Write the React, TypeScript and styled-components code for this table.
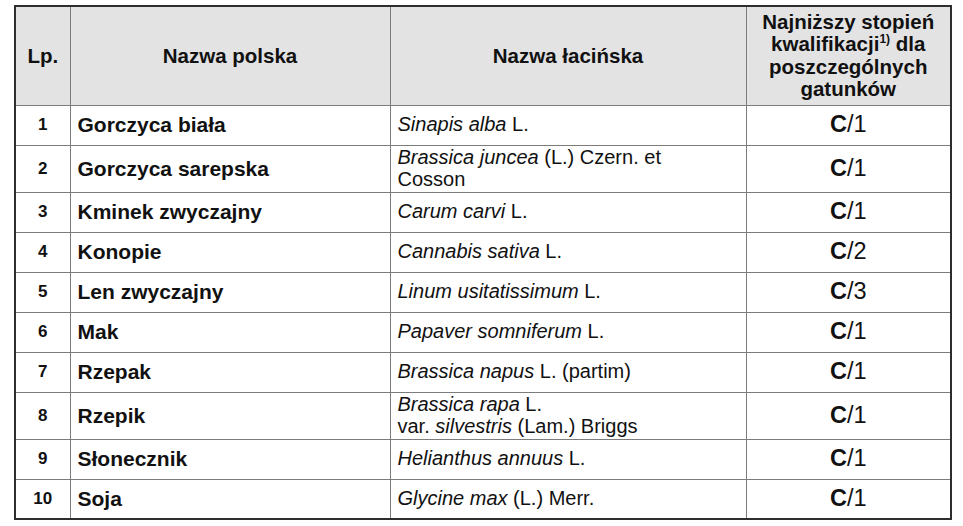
import React from "react";
import styled, { createGlobalStyle } from "styled-components";

type Row = {
  lp: number;
  pl: string;
  latin: React.ReactNode;
  grade: string;
  tall?: boolean;
};

const GlobalStyle = createGlobalStyle`
  html, body {
    margin: 0;
    padding: 0;
    background: #ffffff;
  }
  body {
    font-family: "Liberation Sans", Arial, sans-serif;
    color: #111111;
  }
`;

const Page = styled.div`
  width: 963px;
  height: 526px;
  box-sizing: border-box;
  padding: 5px 13px 0 14px;
`;

const Table = styled.table`
  width: 936px;
  border-collapse: collapse;
  table-layout: fixed;
  border: 2px solid #2e2e2e;
`;

const HeadRow = styled.tr`
  height: 99px;
  background: #e3e3e3;
`;

const BodyRow = styled.tr<{ $tall?: boolean }>`
  height: ${(p) => (p.$tall ? "47px" : "40px")};
`;

const HeadCell = styled.th`
  border: 1px solid #7c7c7c;
  font-weight: bold;
  font-size: 20.5px;
  line-height: 22.5px;
  text-align: center;
  vertical-align: middle;
  padding: 0 2px;
  sup {
    position: relative;
    top: -8px;
    font-size: 12px;
    line-height: 0;
    vertical-align: baseline;
  }
`;

const Cell = styled.td<{ $kind: "lp" | "pl" | "latin" | "grade" }>`
  border: 1px solid #7c7c7c;
  vertical-align: middle;
  font-size: ${(p) =>
    p.$kind === "grade" ? "23.5px" : p.$kind === "pl" ? "21px" : p.$kind === "lp" ? "17px" : "20px"};
  line-height: 21.5px;
  padding: ${(p) =>
    p.$kind === "pl" || p.$kind === "latin" ? "0 4px 0 7px" : "0"};
  text-align: ${(p) => (p.$kind === "lp" || p.$kind === "grade" ? "center" : "left")};
  font-weight: ${(p) => (p.$kind === "lp" || p.$kind === "pl" ? "bold" : "normal")};
  b {
    font-weight: bold;
  }
`;

const rows: Row[] = [
  { lp: 1, pl: "Gorczyca biała", latin: <><i>Sinapis alba</i> L.</>, grade: "1" },
  {
    lp: 2,
    pl: "Gorczyca sarepska",
    latin: <><i>Brassica juncea</i> (L.) Czern. et<br />Cosson</>,
    grade: "1",
    tall: true,
  },
  { lp: 3, pl: "Kminek zwyczajny", latin: <><i>Carum carvi</i> L.</>, grade: "1" },
  { lp: 4, pl: "Konopie", latin: <><i>Cannabis sativa</i> L.</>, grade: "2" },
  { lp: 5, pl: "Len zwyczajny", latin: <><i>Linum usitatissimum</i> L.</>, grade: "3" },
  { lp: 6, pl: "Mak", latin: <><i>Papaver somniferum</i> L.</>, grade: "1" },
  { lp: 7, pl: "Rzepak", latin: <><i>Brassica napus</i> L. (partim)</>, grade: "1" },
  {
    lp: 8,
    pl: "Rzepik",
    latin: <><i>Brassica rapa</i> L.<br />var. <i>silvestris</i> (Lam.) Briggs</>,
    grade: "1",
    tall: true,
  },
  { lp: 9, pl: "Słonecznik", latin: <><i>Helianthus annuus</i> L.</>, grade: "1" },
  { lp: 10, pl: "Soja", latin: <><i>Glycine max</i> (L.) Merr.</>, grade: "1" },
];

export default function App() {
  return (
    <Page>
      <GlobalStyle />
      <Table>
        <colgroup>
          <col style={{ width: 55 }} />
          <col style={{ width: 320 }} />
          <col style={{ width: 356 }} />
          <col style={{ width: 205 }} />
        </colgroup>
        <thead>
          <HeadRow>
            <HeadCell>Lp.</HeadCell>
            <HeadCell>Nazwa polska</HeadCell>
            <HeadCell>Nazwa łacińska</HeadCell>
            <HeadCell>
              Najniższy stopień
              <br />
              kwalifikacji<sup>1)</sup> dla
              <br />
              poszczególnych
              <br />
              gatunków
            </HeadCell>
          </HeadRow>
        </thead>
        <tbody>
          {rows.map((r) => (
            <BodyRow key={r.lp} $tall={r.tall}>
              <Cell $kind="lp">{r.lp}</Cell>
              <Cell $kind="pl">{r.pl}</Cell>
              <Cell $kind="latin">{r.latin}</Cell>
              <Cell $kind="grade">
                <b>C</b>/{r.grade}
              </Cell>
            </BodyRow>
          ))}
        </tbody>
      </Table>
    </Page>
  );
}
